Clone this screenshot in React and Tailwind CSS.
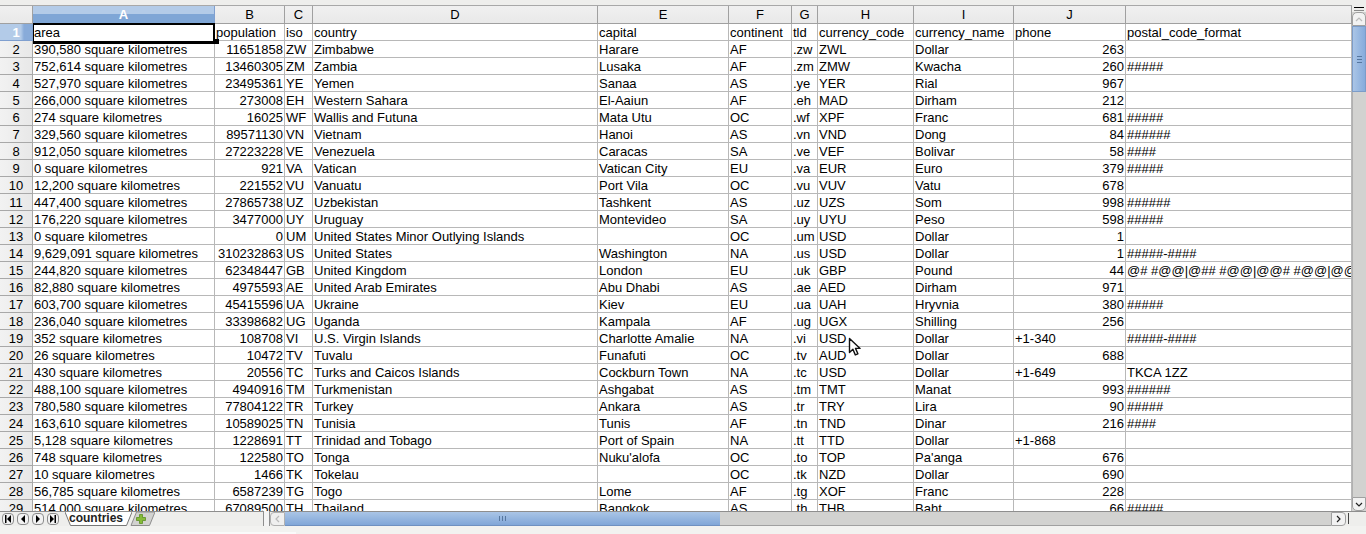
import React from "react";

const COLS = "grid grid-cols-[33px_182px_70px_28px_285px_131px_63px_26px_96px_100px_112px_226px]";

const raw = [
"390,580 square kilometres|11651858|ZW|Zimbabwe|Harare|AF|.zw|ZWL|Dollar|263|",
"752,614 square kilometres|13460305|ZM|Zambia|Lusaka|AF|.zm|ZMW|Kwacha|260|#####",
"527,970 square kilometres|23495361|YE|Yemen|Sanaa|AS|.ye|YER|Rial|967|",
"266,000 square kilometres|273008|EH|Western Sahara|El-Aaiun|AF|.eh|MAD|Dirham|212|",
"274 square kilometres|16025|WF|Wallis and Futuna|Mata Utu|OC|.wf|XPF|Franc|681|#####",
"329,560 square kilometres|89571130|VN|Vietnam|Hanoi|AS|.vn|VND|Dong|84|######",
"912,050 square kilometres|27223228|VE|Venezuela|Caracas|SA|.ve|VEF|Bolivar|58|####",
"0 square kilometres|921|VA|Vatican|Vatican City|EU|.va|EUR|Euro|379|#####",
"12,200 square kilometres|221552|VU|Vanuatu|Port Vila|OC|.vu|VUV|Vatu|678|",
"447,400 square kilometres|27865738|UZ|Uzbekistan|Tashkent|AS|.uz|UZS|Som|998|######",
"176,220 square kilometres|3477000|UY|Uruguay|Montevideo|SA|.uy|UYU|Peso|598|#####",
"0 square kilometres|0|UM|United States Minor Outlying Islands||OC|.um|USD|Dollar|1|",
"9,629,091 square kilometres|310232863|US|United States|Washington|NA|.us|USD|Dollar|1|#####-####",
"244,820 square kilometres|62348447|GB|United Kingdom|London|EU|.uk|GBP|Pound|44|@# #@@~@## #@@~@@# #@@~@@## #@@~@#@ #@@~@@#@ #@@~@@@# #@@",
"82,880 square kilometres|4975593|AE|United Arab Emirates|Abu Dhabi|AS|.ae|AED|Dirham|971|",
"603,700 square kilometres|45415596|UA|Ukraine|Kiev|EU|.ua|UAH|Hryvnia|380|#####",
"236,040 square kilometres|33398682|UG|Uganda|Kampala|AF|.ug|UGX|Shilling|256|",
"352 square kilometres|108708|VI|U.S. Virgin Islands|Charlotte Amalie|NA|.vi|USD|Dollar|+1-340|#####-####",
"26 square kilometres|10472|TV|Tuvalu|Funafuti|OC|.tv|AUD|Dollar|688|",
"430 square kilometres|20556|TC|Turks and Caicos Islands|Cockburn Town|NA|.tc|USD|Dollar|+1-649|TKCA 1ZZ",
"488,100 square kilometres|4940916|TM|Turkmenistan|Ashgabat|AS|.tm|TMT|Manat|993|######",
"780,580 square kilometres|77804122|TR|Turkey|Ankara|AS|.tr|TRY|Lira|90|#####",
"163,610 square kilometres|10589025|TN|Tunisia|Tunis|AF|.tn|TND|Dinar|216|####",
"5,128 square kilometres|1228691|TT|Trinidad and Tobago|Port of Spain|NA|.tt|TTD|Dollar|+1-868|",
"748 square kilometres|122580|TO|Tonga|Nuku'alofa|OC|.to|TOP|Pa'anga|676|",
"10 square kilometres|1466|TK|Tokelau||OC|.tk|NZD|Dollar|690|",
"56,785 square kilometres|6587239|TG|Togo|Lome|AF|.tg|XOF|Franc|228|",
"514,000 square kilometres|67089500|TH|Thailand|Bangkok|AS|.th|THB|Baht|66|#####",
];

const rows = raw.map((l) => l.split("|").map((c) => c.replaceAll("~", "|")));
const headers = ["area","population","iso","country","capital","continent","tld","currency_code","currency_name","phone","postal_code_format"];
const letters = ["A","B","C","D","E","F","G","H","I","J",""];

const cell = "h-[17px] border-r border-b border-[#b8b8b8] px-px leading-[18px] overflow-hidden whitespace-nowrap";
const colHdr = "h-[18px] border-r border-b border-[#a0a0a0] bg-gradient-to-b from-[#f0f0f0] to-[#e9e9e9] text-black text-center leading-[18px]";
const rowHdr = "h-[17px] border-r border-b border-[#a8a8a8] bg-gradient-to-r from-[#f2f2f2] to-[#e8e8e8] text-black text-center leading-[18px]";
const selCol = "h-[18px] border-r border-b border-[#7f9fcf] bg-[linear-gradient(to_bottom,#b3cbe8_45%,#7fa6d6_45%)] text-white font-bold text-center leading-[18px]";
const selRow = "h-[17px] border-r border-b border-[#7f9fcf] bg-[linear-gradient(to_right,#b3cbe8_65%,#88abd9_75%)] text-white font-bold text-center leading-[18px]";

function isRight(ci, v) {
  return ci === 1 || (ci === 9 && !v.startsWith("+"));
}

function Nav({ d }) {
  return (
    <span className="w-[12px] h-[12px] rounded-[4px] border border-[#8c8c8c] bg-[#f2f2f2] flex items-center justify-center">
      <svg width="8" height="8" viewBox="0 0 8 8" className="text-black"><path d={d} fill="currentColor" /></svg>
    </span>
  );
}

export default function App() {
  return (
    <div className="w-[1366px] h-[534px] overflow-hidden bg-[#eeeeec] flex flex-col text-[13px] text-black font-['Liberation_Sans',Arial,sans-serif] relative">
      <div className="flex h-[511px] shrink-0">
        <div className="w-[1352px] flex flex-col">
          <div className="h-[6px] shrink-0 border-b border-[#a8a8a8] bg-[#eeeeec]" />
          <div className="flex-1 overflow-hidden bg-white">
            <div className={COLS}>
              <div className={colHdr} />
              {letters.map((l, i) => (
                <div key={i} className={i === 0 ? selCol : colHdr}>{l}</div>
              ))}
            </div>
            <div className={COLS}>
              <div className={selRow}>1</div>
              {headers.map((h, i) =>
                i === 0 ? (
                  <div key={i} className="relative h-[17px] px-px leading-[18px] whitespace-nowrap">
                    {h}
                    <span className="absolute -top-px left-0 -right-0 -bottom-[3px] border-t-2 border-l border-r-2 border-b-[3px] border-black" />
                    <span className="absolute left-[180px] top-[15px] w-[6px] h-[5px] bg-black" />
                  </div>
                ) : (
                  <div key={i} className={cell}>{h}</div>
                )
              )}
            </div>
            {rows.map((r, ri) => (
              <div key={ri} className={COLS}>
                <div className={rowHdr}>{ri + 2}</div>
                {r.map((v, ci) => (
                  <div key={ci} className={cell + (isRight(ci, v) ? " text-right" : "")}>{v}</div>
                ))}
              </div>
            ))}
          </div>
        </div>
        <div className="w-[14px] bg-[#d2d2d0] flex flex-col">
          <div className="h-[12px] bg-[#eeeeec] flex flex-col items-center pt-[7px] gap-[2px]">
            <span className="w-[10px] h-px bg-black" />
            <span className="w-[10px] h-px bg-[#8a8a8a]" />
          </div>
          <div className="h-[14px] rounded-t-[5px] border border-[#a0a0a0] bg-[#f2f2f2] flex items-center justify-center">
            <svg width="8" height="5" viewBox="0 0 8 5"><path d="M1 4l3-3 3 3" fill="none" stroke="#bbb" strokeWidth="1.2" /></svg>
          </div>
          <div className="h-[66px] border border-[#7c9cc8] bg-gradient-to-r from-[#aac5e6] to-[#86abdc] flex flex-col items-center justify-center gap-[2px]">
            <span className="w-[5px] h-px bg-[#56779f]" />
            <span className="w-[5px] h-px bg-[#56779f]" />
            <span className="w-[5px] h-px bg-[#56779f]" />
          </div>
          <div className="flex-1 border-l border-[#b0b0b0]" />
          <div className="h-[14px] rounded-b-[5px] border border-[#a0a0a0] bg-[#f2f2f2] flex items-center justify-center">
            <svg width="8" height="5" viewBox="0 0 8 5"><path d="M1 1l3 3 3-3" fill="none" stroke="#222" strokeWidth="1.2" /></svg>
          </div>
        </div>
      </div>
      <div className="h-[15px] shrink-0 border-t border-[#8e8e8e] bg-[#eeeeec] flex items-stretch">
        <div className="w-[65px] pl-[2px] flex items-center gap-[3px]">
          <Nav d="M1 0h1.5v8H1zM7 0v8L3 4z" />
          <Nav d="M6 0v8L2 4z" />
          <Nav d="M2 0v8l4-4z" />
          <Nav d="M5.5 0H7v8H5.5zM1 0v8l4-4z" />
        </div>
        <div className="relative w-[67px] h-[14px] shrink-0 pl-[4px] font-bold text-[12px] leading-[13px] text-[#222]">
          <svg className="absolute left-0 top-0" width="67" height="14" viewBox="0 0 67 14">
            <path d="M0 0L5.5 13.5H61.5L67 0" fill="#fff" stroke="#777" strokeWidth="1" />
          </svg>
          <span className="relative">countries</span>
        </div>
        <div className="relative w-[25px] h-[14px] -ml-[2px] shrink-0 z-[-0]">
          <svg className="absolute left-0 top-0" width="25" height="14" viewBox="0 0 25 14">
            <path d="M1 13.5L6.5 0H25L19.5 13.5z" fill="#d2d2d0" stroke="#8e8e8e" strokeWidth="1" />
            <path d="M9.5 2.5h3v3h3v3h-3v3h-3v-3h-3v-3h3z" fill="#86bb3a" stroke="#5b8f22" strokeWidth="0.8" />
          </svg>
        </div>
        <div className="w-[108px] shrink-0" />
        <div className="w-[7px] shrink-0 -mt-px border-x border-[#8e8e8e] bg-[#f4f4f4]" />
        <div className="w-[15px] shrink-0 border border-[#b0b0b0] rounded-l-[4px] bg-[#efefef] flex items-center justify-center">
          <svg width="5" height="8" viewBox="0 0 5 8"><path d="M4 1L1 4l3 3" fill="none" stroke="#bbb" strokeWidth="1.2" /></svg>
        </div>
        <div className="w-[435px] shrink-0 bg-gradient-to-b from-[#aac5e6] to-[#80a6d8] border-b border-[#6f90c0] flex items-center justify-center gap-[2px]">
          <span className="w-px h-[5px] bg-[#56779f]" />
          <span className="w-px h-[5px] bg-[#56779f]" />
          <span className="w-px h-[5px] bg-[#56779f]" />
        </div>
        <div className="w-[611px] shrink-0 bg-[#d2d2d0] border-b border-[#a0a0a0]" />
        <div className="w-[15px] shrink-0 border border-[#a0a0a0] rounded-r-[4px] bg-[#f2f2f2] flex items-center justify-center">
          <svg width="5" height="8" viewBox="0 0 5 8"><path d="M1 1l3 3-3 3" fill="none" stroke="#222" strokeWidth="1.2" /></svg>
        </div>
        <div className="w-px h-[11px] ml-[2px] mt-px bg-[#444]" />
      </div>
      <div className="flex-1 bg-[#f2f2f0] pt-[6px] pl-[50px]">
        <div className="w-[246px] h-[2px] bg-[#fafafa]" />
      </div>
      <svg className="absolute left-[848px] top-[337px]" width="15" height="20" viewBox="0 0 15 20">
        <path d="M1.5 1.5v14l3.4-3.2 2.4 5.6 2.6-1.1-2.4-5.4h4.6z" fill="#fff" stroke="#111" strokeWidth="1.4" strokeLinejoin="round" />
      </svg>
    </div>
  );
}
